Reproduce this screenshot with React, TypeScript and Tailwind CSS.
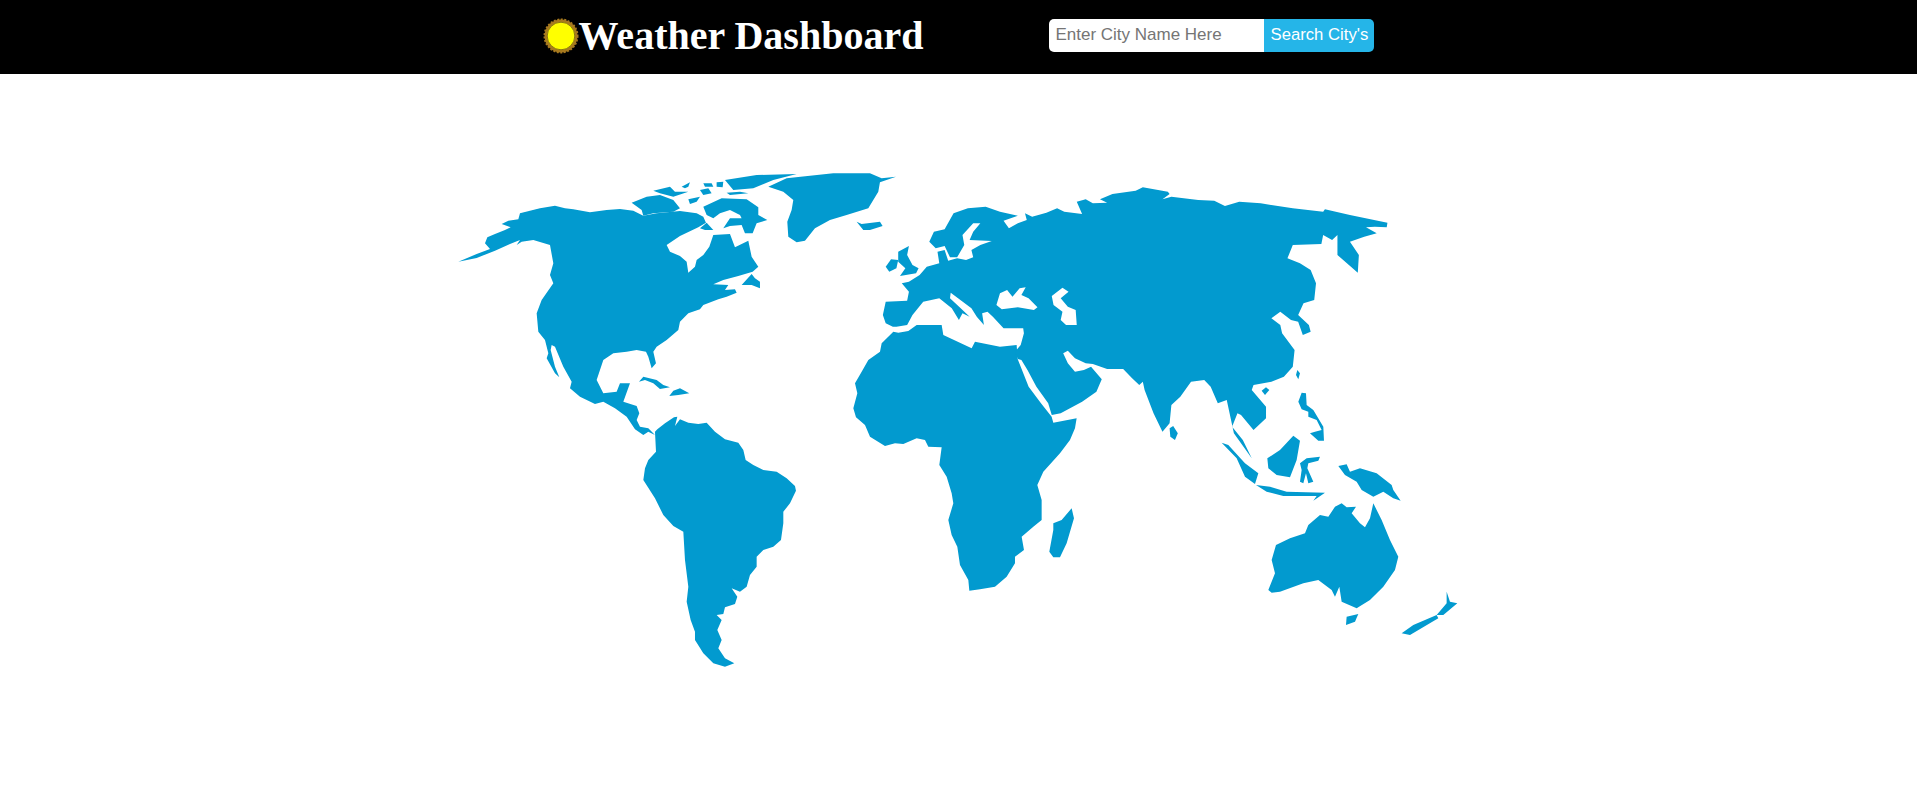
const americas = [
  // north and central america
  "55,335 110,312 150,297 135,280 142,262 165,252 195,240 212,232 185,222 205,212 235,208 240,190 270,182 300,175 345,167 375,175 400,178 450,187 500,180 540,177 580,182 610,197 650,190 720,183 770,190 790,200 798,218 775,232 720,258 680,285 690,305 720,318 740,335 745,368 765,350 770,330 790,315 808,290 820,255 870,252 885,292 925,272 935,320 955,350 938,365 895,378 850,390 820,403 865,405 855,420 885,418 890,428 860,440 835,448 790,465 780,478 745,490 720,515 715,540 680,570 650,590 640,605 648,640 635,655 625,620 618,605 590,600 560,605 520,610 490,630 480,660 470,690 490,730 530,725 540,700 570,700 550,755 590,768 598,790 590,810 600,830 625,835 645,855 625,845 610,855 585,838 560,800 525,775 490,755 465,762 420,740 390,715 395,695 370,650 345,590 335,585 332,600 345,650 358,682 345,670 320,625 325,610 315,570 295,545 290,490 305,450 340,400 330,375 340,340 330,285 280,270 245,275 230,285 240,270 210,282 165,302 110,324",
  // newfoundland
  "905,405 935,372 945,385 960,395 960,415 935,405",
  // arctic islands
  "575,158 620,140 660,135 700,150 720,175 700,185 640,190 610,197 605,180",
  "640,122 690,110 705,125 745,125 700,140 660,130",
  "725,110 750,97 745,110 735,115",
  "790,100 815,100 820,110 795,110",
  "830,97 850,95 848,112 830,110",
  "780,120 805,115 815,130 790,135",
  "745,148 780,140 770,155 750,162",
  "855,90 950,75 1070,72 1000,90 940,115 880,120",
  "860,128 900,125 925,130 870,135",
  "790,170 845,145 920,148 955,172 955,195 982,210 950,220 938,250 915,250 905,225 870,228 850,235 870,205 905,205 900,195 870,180 840,190 820,205 800,195",
  "780,235 800,218 820,240 795,240",
  // greenland, iceland
  "985,110 1040,85 1180,70 1290,70 1325,85 1368,80 1320,97 1315,125 1300,150 1285,175 1220,195 1170,210 1125,235 1095,272 1070,277 1045,260 1042,215 1055,180 1060,150 1030,125",
  "1250,215 1265,222 1320,215 1328,228 1290,240 1270,240",
  // cuba, hispaniola
  "597,695 610,680 650,690 670,705 690,712 660,717 640,700 615,690",
  "700,722 720,715 748,730 715,735 688,738",
]

const southAmerica =
  "165,95 172,88 195,70 222,52 232,50 225,78 240,58 265,68 295,72 320,68 345,95 375,118 415,128 430,150 437,180 460,195 490,210 530,215 560,235 585,258 588,272 570,310 550,335 550,370 543,420 520,440 490,450 470,470 470,500 450,525 440,560 420,575 395,565 412,590 405,612 375,622 370,642 350,645 365,660 352,690 365,720 355,745 375,775 403,790 375,800 340,790 310,760 285,720 285,695 272,660 260,605 265,560 255,480 250,395 220,378 190,345 165,295 130,240 135,205 145,180 168,155"

const eurasia = [
  "120,470 100,460 92,435 100,395 160,392 165,365 145,340 165,335 195,315 215,290 250,280 245,245 265,240 275,272 300,265 325,270 345,262 340,240 365,225 397,213 335,210 345,185 365,160 345,160 315,195 320,225 300,262 280,262 265,228 240,235 222,215 235,185 265,178 290,130 330,115 380,110 420,125 470,137 430,152 445,175 470,160 495,150 490,130 510,140 550,128 580,115 600,125 650,132 635,95 660,88 680,100 720,98 700,88 735,72 800,62 820,52 890,65 895,72 875,88 900,80 975,90 1020,92 1050,108 1090,95 1150,100 1240,115 1325,125 1330,118 1400,135 1505,158 1503,172 1470,170 1445,172 1475,190 1440,200 1400,215 1425,255 1422,308 1365,255 1365,195 1350,210 1325,195 1320,222 1240,225 1225,265 1260,280 1290,300 1305,340 1300,390 1270,400 1255,435 1285,465 1290,485 1268,495 1255,455 1235,450 1205,425 1180,445 1205,465 1210,490 1245,540 1240,590 1215,620 1180,635 1130,645 1125,660 1165,710 1165,745 1130,780 1095,735 1085,730 1070,770 1100,810 1125,865 1075,790 1055,690 1030,700 1010,650 992,630 955,635 925,680 900,705 895,760 875,785 850,730 825,660 820,635 810,645 790,625 765,597 720,597 680,582 660,580 630,565 610,542 597,550 610,580 630,605 655,600 675,590 705,628 690,665 650,695 590,730 565,735 555,700 522,650 497,600 480,570 470,567 462,545 478,525 487,490 485,475 430,475 400,440 385,425 370,430 375,465 355,440 340,415 282,368 280,385 310,415 335,440 315,430 305,450 285,415 250,385 205,395 175,435 160,465 130,470",
  // ireland, britain, sri lanka
  "100,290 115,268 135,270 130,295 110,305",
  "135,245 165,228 160,255 175,285 192,295 185,310 140,318 155,295 135,275",
  "895,775 905,768 918,790 910,810 897,800",
]

const seas = [
  // black sea, caspian
  "410,405 420,370 440,360 455,380 475,355 492,352 480,375 500,385 525,412 515,420 470,412 425,418",
  "565,378 595,353 612,365 590,385 610,410 632,420 635,465 605,465 590,450 595,425 570,405",
]

const africa = [
  "160,5 175,8 205,3 230,-15 305,-15 310,15 395,55 405,35 480,50 530,45 533,87 566,170 603,220 635,260 640,278 710,265 705,295 690,330 660,370 610,425 592,465 605,510 605,570 580,590 545,620 552,660 525,680 525,700 500,740 465,770 420,778 388,782 385,750 360,705 352,650 335,615 325,570 340,520 335,490 320,440 298,405 305,352 265,350 255,330 230,325 190,342 165,340 135,348 90,320 75,285 48,262 40,235 52,190 45,160 65,125 85,90 120,65 125,40",
  "695,535 702,565 680,640 660,682 640,682 628,665 640,600 640,580 665,570",
]

const oceania = [
  "352,0 360,10 355,28 348,15",
  "245,62 258,52 268,60 255,75",
  "365,68 378,70 380,105 400,120 430,170 432,212 415,212 390,190 405,185 425,180 410,150 385,140 385,125 365,118 355,95",
  "125,218 145,225 195,280 235,310 225,342 195,320 170,265",
  "262,265 300,240 340,197 360,212 350,270 330,322 290,315 265,295",
  "360,280 380,265 420,260 415,272 385,280 382,295 400,335 385,340 378,310 370,340 360,335 365,300",
  "228,345 270,350 320,365 435,368 400,392 410,378 310,378 260,365",
  "475,288 500,283 510,305 540,295 590,310 635,345 640,360 662,392 640,385 610,365 580,380 545,360 530,335 495,315",
  "265,660 285,610 275,570 288,525 330,505 375,490 385,465 420,435 445,440 465,410 485,400 500,412 528,410 515,430 540,460 555,472 570,445 580,400 605,450 630,510 655,560 645,600 610,650 570,690 530,715 485,695 478,650 465,680 455,660 415,630 370,640 300,665 275,668",
  "500,740 535,732 525,755 498,765",
  "800,665 810,695 832,700 790,735 770,735 800,700",
  "665,790 700,765 770,735 775,745 690,795",
]

const WorldMap = () => (
  <svg viewBox="444 160 1029 520" className="w-[1029px] h-[520px] fill-[#029acf] blur-[0.5px]">
    <g transform="translate(440 150) scale(0.3333)">
      {americas.map((p) => <polygon key={p} points={p} />)}
    </g>
    <g transform="translate(600 400) scale(0.3333)">
      <polygon points={southAmerica} />
    </g>
    <g transform="translate(840 330) scale(0.3333)">
      {africa.map((p) => <polygon key={p} points={p} />)}
    </g>
    <g transform="translate(850 170) scale(0.3571 0.3333)">
      {eurasia.map((p) => <polygon key={p} points={p} />)}
      {seas.map((p) => <polygon key={p} points={p} className="fill-white" />)}
    </g>
    <g transform="translate(1180 370) scale(0.3333)">
      {oceania.map((p) => <polygon key={p} points={p} />)}
    </g>
  </svg>
)

const SunIcon = () => (
  <svg viewBox="0 0 36 36" className="w-[36px] h-[36px] shrink-0">
    <circle cx="18" cy="18" r="16.5" fill="#a87a1f" stroke="#a87a1f" strokeWidth="2" strokeDasharray="2 1.5" />
    <circle cx="18" cy="18" r="13.8" fill="#ffff00" stroke="#8a7a10" strokeWidth="1" />
  </svg>
)

export default function App() {
  return (
    <div className="min-h-screen bg-white">
      <header className="h-[74px] bg-black flex items-center justify-center gap-[126px] pb-[3px]">
        <div className="flex items-center">
          <SunIcon />
          <h1 className="text-white font-bold text-[40px] leading-none font-['Liberation_Serif',serif]">
            Weather Dashboard
          </h1>
        </div>
        <div className="flex h-[33px] font-['Liberation_Sans',sans-serif] text-[17px]">
          <input
            placeholder="Enter City Name Here"
            className="w-[215px] h-full bg-white rounded-l-[5px] pl-[6px] pb-[2px] text-black placeholder:text-[#757575] outline-none"
          />
          <button className="w-[110px] h-full bg-[#25b5e8] text-white text-[16.7px] pb-[2px] rounded-r-[5px]">Search City's</button>
        </div>
      </header>
      <main className="flex justify-center pt-[86px]">
        <WorldMap />
      </main>
    </div>
  )
}
